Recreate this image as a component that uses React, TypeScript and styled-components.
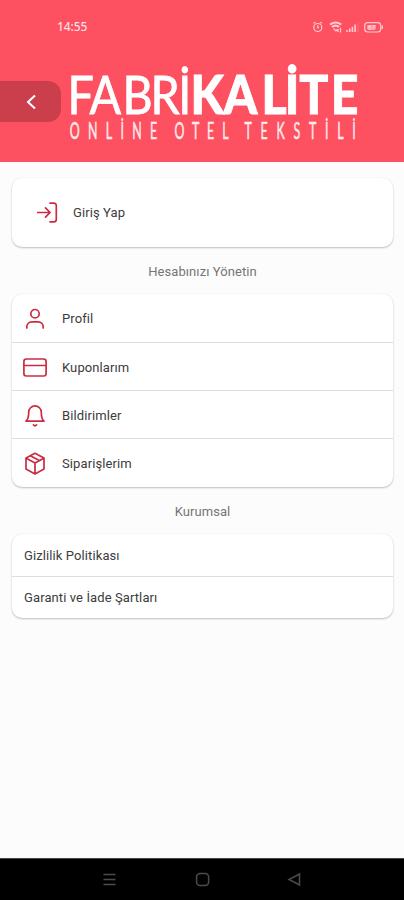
import React from 'react';
import styled, { createGlobalStyle } from 'styled-components';

const GlobalStyle = createGlobalStyle`
  * { box-sizing: border-box; }
  body { margin: 0; background: #fcfcfc; font-family: Roboto, "Noto Sans", sans-serif; }
`;

const Screen = styled.div`
  width: 404px;
  height: 900px;
  display: flex;
  flex-direction: column;
  overflow: hidden;
  background: #fcfcfc;
`;

const Header = styled.header`
  height: 162px;
  flex: none;
  background: #fd5060;
  color: #fff;
`;

const StatusBar = styled.div`
  height: 54px;
  padding: 0 21px 1px 57px;
  display: flex;
  align-items: center;
  justify-content: space-between;
  color: #ffdde0;
`;

const Clock = styled.time`
  font: 500 12px/16px "Noto Sans", sans-serif;
  letter-spacing: -0.1px;
`;

const Brand = styled.div`
  display: flex;
  align-items: flex-start;
`;

const BackButton = styled.button`
  width: 61px;
  height: 41px;
  margin-top: 27px;
  padding: 0;
  border: 0;
  border-radius: 0 13px 13px 0;
  background: #cb3f4d;
  color: #fff;
  display: flex;
  align-items: center;
  padding-left: 25px;
`;

const Content = styled.main`
  flex: 1;
  padding: 16px 11px 0 12px;
`;

const Card = styled.section`
  background: #fff;
  border-radius: 10px;
  box-shadow: 0 1px 2px rgba(0, 0, 0, 0.24), 0 0 2px rgba(0, 0, 0, 0.06);
  overflow: hidden;
`;

const Row = styled.a<{ $height: number; $inset: number; $gap?: number }>`
  height: ${(p) => p.$height}px;
  padding: 1px 0 0 ${(p) => p.$inset}px;
  gap: ${(p) => p.$gap ?? 0}px;
  display: flex;
  align-items: center;
  font-size: 13px;
  line-height: 18px;
  letter-spacing: 0.1px;
  color: #3c3c3c;
  &:not(:last-child) { border-bottom: 1px solid #dedede; padding-top: 2px; }
`;

const RowIcon = styled.svg`
  width: 24px;
  height: 24px;
  flex: none;
  fill: none;
  stroke: #cb2c41;
  stroke-width: 1.7;
  stroke-linecap: round;
  stroke-linejoin: round;
`;

const Heading = styled.h2`
  margin: 0;
  height: 47px;
  display: flex;
  align-items: center;
  justify-content: center;
  padding-top: 2px;
  font-size: 13px;
  font-weight: 400;
  letter-spacing: 0.08px;
  color: #757575;
`;

const NavBar = styled.nav`
  height: 42px;
  flex: none;
  background: #000;
  border-top: 1px solid #444;
  display: flex;
  justify-content: space-between;
  align-items: center;
  padding: 0 102px;
`;

const NavIcon = styled.svg`
  width: 15px;
  height: 15px;
  fill: none;
  stroke: #4c4c4c;
  stroke-width: 1.5;
`;

const StatusIcons = () => (
  <svg width="72" height="16" viewBox="311 18 72 16" fill="none" stroke="#ffc9ce" strokeWidth="1.2">
    <circle cx="317.8" cy="26.5" r="4" />
    <path d="M313.5 22.3l2-1M322 22.3l-2-1M317.8 24.2v2.5h1.2" />
    <path d="M330 23.6q5.6-4 11.2 0M332 26q3.6-2.7 7.2 0" strokeWidth="2" />
    <path d="M333.5 27.5l2.4 2.4 1.7-1.7M338 28v3M340.5 27v4.4" strokeWidth="1.3" />
    <path d="M347 31v-2M349.7 31v-3.6M352.4 31v-5.2M355.1 31v-7.5" strokeWidth="1.6" />
    <path d="M358 22v9" opacity=".25" />
    <rect x="364.7" y="21.7" width="16" height="9.3" rx="3" />
    <path d="M382.2 24.6v3.5" strokeWidth="1.4" />
    <rect x="367" y="24" width="9" height="4.8" rx="1" fill="#ff99a2" stroke="none" />
    <text x="368" y="29" fontSize="6.5" fontFamily="Roboto, sans-serif" fill="#ffe3e5" stroke="none">67</text>
  </svg>
);

const Logo = () => (
  <svg width="300" height="100" viewBox="61 54 300 100" fill="#fff" role="img" aria-label="Fabrikalite">
    <g fontFamily="Lato, sans-serif" fontSize="53" stroke="#fff">
      <text transform="translate(67.5 114) scale(.88 1)" x="0 25 62.5 94.3 126" strokeWidth=".8">FABRİ</text>
      <text transform="translate(190.5 114) scale(.91 1)" x="0 36.3 78 103.5 119.5 154" fontWeight="900" strokeWidth=".8">KALİTE</text>
    </g>
    <g fontFamily="Lato, sans-serif" fontSize="23" fill="#ffe9eb" stroke="#ffe9eb" strokeWidth=".5">
      <text transform="translate(69.8 138.5) scale(.54 1)" textLength="162" lengthAdjust="spacing">ONLİNE</text>
      <text transform="translate(174.5 138.5) scale(.54 1)" textLength="100" lengthAdjust="spacing">OTEL</text>
      <text transform="translate(244.5 138.5) scale(.54 1)" textLength="206" lengthAdjust="spacing">TEKSTİLİ</text>
    </g>
  </svg>
);

const menu = [
  { label: 'Profil', height: 49, icon: <><circle cx="12" cy="6.7" r="4.2" /><path d="M3.8 21v-1.2a5 5 0 0 1 5-5h6.4a5 5 0 0 1 5 5V21" /></> },
  { label: 'Kuponlarım', height: 48, icon: <><rect x=".9" y="3" width="22.2" height="17" rx="2.4" /><path d="M1 9.5h22" /></> },
  { label: 'Bildirimler', height: 48, icon: <><path d="M3 17.2c2.4-2 2.7-4.2 2.7-9a6.3 6.3 0 0 1 12.6 0c0 4.8.3 7 2.7 9z" /><path d="M10.4 20.8q1.6 2 3.2 0" /></> },
  { label: 'Siparişlerim', height: 48, icon: <><path d="M12 1.3l9 4.7v11l-9 4.9-9-4.9V6zM3.2 6.2l8.8 4.8 8.8-4.8M12 11v10.7M7.3 3.7l9 4.9" /></> },
];

export default function App() {
  return (
    <>
      <GlobalStyle />
      <Screen>
        <Header>
          <StatusBar>
            <Clock>14:55</Clock>
            <StatusIcons />
          </StatusBar>
          <Brand>
            <BackButton aria-label="Geri">
              <svg width="12" height="16" viewBox="0 0 12 16" fill="none" stroke="currentColor" strokeWidth="2">
                <path d="M10 1.5L3 8l7 6.5" />
              </svg>
            </BackButton>
            <Logo />
          </Brand>
        </Header>
        <Content>
          <Card>
            <Row $height={69} $inset={23} $gap={14}>
              <RowIcon viewBox="0 0 24 24">
                <path d="M2.7 11.5H14.5M10.5 6.8l4.6 4.7-4.6 4.7M15 2.2h4a2.3 2.3 0 0 1 2.3 2.3v14a2.3 2.3 0 0 1-2.3 2.3h-4" />
              </RowIcon>
              Giriş Yap
            </Row>
          </Card>
          <Heading>Hesabınızı Yönetin</Heading>
          <Card>
            {menu.map(({ label, height, icon }) => (
              <Row key={label} $height={height} $inset={11} $gap={15}>
                <RowIcon viewBox="0 0 24 24">{icon}</RowIcon>
                {label}
              </Row>
            ))}
          </Card>
          <Heading>Kurumsal</Heading>
          <Card>
            <Row $height={43} $inset={12}>Gizlilik Politikası</Row>
            <Row $height={41} $inset={12}>Garanti ve İade Şartları</Row>
          </Card>
        </Content>
        <NavBar>
          <NavIcon viewBox="0 0 15 15"><path d="M1.5 2.5h12M1.5 7.5h12M1.5 12.5h12" /></NavIcon>
          <NavIcon viewBox="0 0 15 15"><rect x="1.6" y="1.6" width="12" height="12" rx="3.5" /></NavIcon>
          <NavIcon viewBox="0 0 15 15"><path d="M12.5 2v11L2 7.5z" /></NavIcon>
        </NavBar>
      </Screen>
    </>
  );
}
